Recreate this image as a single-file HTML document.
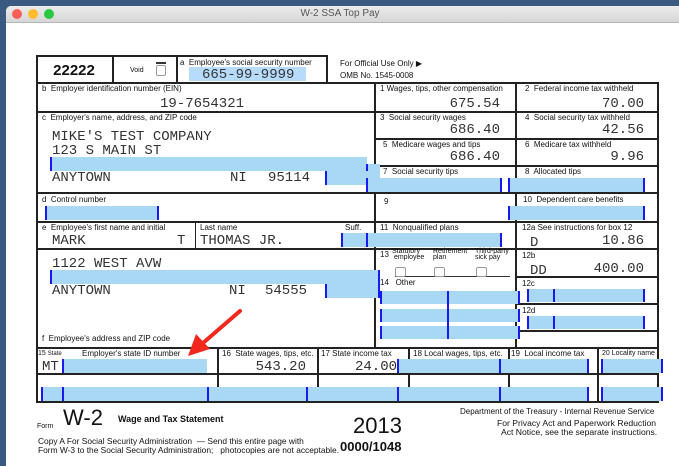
<!DOCTYPE html>
<html><head><meta charset="utf-8"><style>
*{margin:0;padding:0;box-sizing:border-box}
body{width:679px;height:458px;overflow:hidden;background:#3b5a82;position:relative;font-family:"Liberation Sans",sans-serif;color:#111}
.a{position:absolute}
.win{position:absolute;left:6px;top:6px;width:680px;height:460px;background:#fff;border-radius:5px 5px 0 0;overflow:hidden}
.tb{position:absolute;left:0;top:0;width:100%;height:17px;background:linear-gradient(#ececec,#d6d6d6);border-bottom:1px solid #b5b5b5}
.h{position:absolute;height:2px;background:#222}
.v{position:absolute;width:2px;background:#222}
.l{position:absolute;font-size:8px;white-space:nowrap;line-height:8px}
.m{position:absolute;font-family:"Liberation Mono",monospace;font-size:14px;white-space:nowrap;line-height:14px;color:#333}
.r{text-align:right}
.x{position:absolute;background:#a8d8f4;border-left:2px solid #1a1af0;border-right:2px solid #1a1af0}
.cb{position:absolute;width:9px;height:10px;border:1px solid #999;border-radius:2px;background:#fff}
</style></head><body>
<div class="win">
<div class="tb">
<div class="a" style="left:6px;top:3px;width:10px;height:10px;border-radius:50%;background:#fc5f57"></div>
<div class="a" style="left:22px;top:3px;width:10px;height:10px;border-radius:50%;background:#fdbc2e"></div>
<div class="a" style="left:38px;top:3px;width:10px;height:10px;border-radius:50%;background:#29c840"></div>
<div class="a" style="left:0;width:668px;top:2px;text-align:center;font-size:10px;color:#555">W-2 SSA Top Pay</div>
</div>
</div>
<div class="h" style="left:36px;top:55px;width:292px"></div>
<div class="v" style="left:36px;top:55px;height:348px"></div>
<div class="v" style="left:112px;top:55px;height:28px"></div>
<div class="v" style="left:176px;top:55px;height:28px"></div>
<div class="v" style="left:326px;top:55px;height:28px"></div>
<div class="h" style="left:36px;top:82px;width:623px"></div>
<div class="v" style="left:657px;top:82px;height:321px"></div>
<div class="v" style="left:374px;top:82px;height:267px"></div>
<div class="v" style="left:515px;top:82px;height:266px"></div>
<div class="h" style="left:36px;top:111px;width:623px"></div>
<div class="h" style="left:374px;top:138px;width:285px"></div>
<div class="h" style="left:380px;top:165px;width:279px"></div>
<div class="h" style="left:36px;top:192px;width:623px"></div>
<div class="h" style="left:36px;top:221px;width:623px"></div>
<div class="h" style="left:36px;top:248px;width:623px"></div>
<div class="v" style="left:195px;top:222px;height:27px;width:1px"></div>
<div class="h" style="left:515px;top:276px;width:144px"></div>
<div class="h" style="left:515px;top:303px;width:144px"></div>
<div class="h" style="left:515px;top:330px;width:144px"></div>
<div class="h" style="left:36px;top:347px;width:623px"></div>
<div class="h" style="left:36px;top:373px;width:623px"></div>
<div class="h" style="left:36px;top:401px;width:623px"></div>
<div class="v" style="left:217px;top:348px;height:54px"></div>
<div class="v" style="left:317px;top:348px;height:54px"></div>
<div class="v" style="left:408px;top:348px;height:54px"></div>
<div class="v" style="left:508px;top:348px;height:54px"></div>
<div class="v" style="left:597px;top:348px;height:54px"></div>
<div class="a" style="left:36px;width:76px;top:62px;text-align:center;font-weight:bold;font-size:15px">22222</div>
<div class="l" style="left:130px;top:67px;font-size:7px">Void</div>
<div class="a" style="left:156px;top:62px;width:10px;height:2px;background:#333"></div>
<div class="cb" style="left:156px;top:65px;width:10px;height:11px"></div>
<div class="l" style="left:180px;top:59px">a&nbsp; Employee's social security number</div>
<div class="a" style="left:189px;top:67px;width:117px;height:14px;background:#b7dcfb"></div>
<div class="m" style="left:202px;top:68px">665-99-9999</div>
<div class="l" style="left:340px;top:60px">For Official Use Only &#9654;</div>
<div class="l" style="left:340px;top:72px">OMB No. 1545-0008</div>
<div class="l" style="left:42px;top:85px">b&nbsp; Employer identification number (EIN)</div>
<div class="m" style="left:160px;top:97px">19-7654321</div>
<div class="l" style="left:380px;top:85px">1 Wages, tips, other compensation</div>
<div class="m r" style="left:400px;width:100px;top:97px">675.54</div>
<div class="l" style="left:525px;top:85px">2&nbsp; Federal income tax withheld</div>
<div class="m r" style="left:540px;width:104px;top:97px">70.00</div>
<div class="l" style="left:42px;top:114px">c&nbsp; Employer's name, address, and ZIP code</div>
<div class="m" style="left:52px;top:130px">MIKE'S TEST COMPANY</div>
<div class="m" style="left:52px;top:144px">123 S MAIN ST</div>
<div class="x" style="left:50px;top:157px;width:317px;height:14px;border-right:0"></div>
<div class="x" style="left:366px;top:164px;width:14px;height:20px;border-right:0"></div>
<div class="x" style="left:325px;top:171px;width:44px;height:14px;border-right:0"></div>
<div class="m" style="left:52px;top:171px">ANYTOWN</div>
<div class="m" style="left:230px;top:171px">NI</div>
<div class="m" style="left:268px;top:171px">95114</div>
<div class="l" style="left:380px;top:114px">3&nbsp; Social security wages</div>
<div class="m r" style="left:400px;width:100px;top:123px">686.40</div>
<div class="l" style="left:525px;top:114px">4&nbsp; Social security tax withheld</div>
<div class="m r" style="left:540px;width:104px;top:123px">42.56</div>
<div class="l" style="left:383px;top:141px">5&nbsp; Medicare wages and tips</div>
<div class="m r" style="left:400px;width:100px;top:150px">686.40</div>
<div class="l" style="left:525px;top:141px">6&nbsp; Medicare tax withheld</div>
<div class="m r" style="left:540px;width:104px;top:150px">9.96</div>
<div class="l" style="left:383px;top:168px">7&nbsp; Social security tips</div>
<div class="x" style="left:366px;top:178px;width:136px;height:14px"></div>
<div class="l" style="left:525px;top:168px">8&nbsp; Allocated tips</div>
<div class="x" style="left:508px;top:178px;width:137px;height:14px"></div>
<div class="l" style="left:42px;top:196px">d&nbsp; Control number</div>
<div class="x" style="left:45px;top:206px;width:114px;height:14px"></div>
<div class="l" style="left:384px;top:198px">9</div>
<div class="l" style="left:523px;top:196px">10&nbsp; Dependent care benefits</div>
<div class="x" style="left:508px;top:206px;width:137px;height:14px"></div>
<div class="l" style="left:42px;top:224px">e&nbsp; Employee's first name and initial</div>
<div class="l" style="left:200px;top:224px">Last name</div>
<div class="l" style="left:345px;top:224px">Suff.</div>
<div class="m" style="left:52px;top:234px">MARK</div>
<div class="m" style="left:177px;top:234px">T</div>
<div class="m" style="left:200px;top:234px">THOMAS JR.</div>
<div class="l" style="left:380px;top:224px">11&nbsp; Nonqualified plans</div>
<div class="x" style="left:341px;top:233px;width:161px;height:14px"></div>
<div class="a" style="left:366px;top:233px;width:2px;height:14px;background:#1a1af0"></div>
<div class="l" style="left:522px;top:224px">12a See instructions for box 12</div>
<div class="m" style="left:530px;top:236px">D</div>
<div class="m r" style="left:540px;width:104px;top:234px">10.86</div>
<div class="m" style="left:52px;top:257px">1122 WEST AVW</div>
<div class="x" style="left:50px;top:270px;width:330px;height:14px;border-right:0"></div>
<div class="x" style="left:325px;top:284px;width:55px;height:14px;border-right:0"></div>
<div class="a" style="left:378px;top:270px;width:2px;height:28px;background:#1a1af0"></div>
<div class="m" style="left:52px;top:284px">ANYTOWN</div>
<div class="m" style="left:229px;top:284px">NI</div>
<div class="m" style="left:265px;top:284px">54555</div>
<div class="l" style="left:42px;top:335px">f&nbsp; Employee's address and ZIP code</div>
<div class="l" style="left:380px;top:251px">13</div>
<div class="l" style="left:392px;top:249px;line-height:6px;font-size:7px">Statutory<br>&nbsp;employee</div>
<div class="l" style="left:433px;top:249px;line-height:6px;font-size:7px">Retirement<br>plan</div>
<div class="l" style="left:475px;top:249px;line-height:6px;font-size:7px">Third-party<br>sick pay</div>
<div class="a" style="left:395px;top:276px;width:115px;height:1px;background:#333"></div>
<div class="cb" style="left:395px;top:267px;width:11px"></div>
<div class="cb" style="left:434px;top:267px;width:11px"></div>
<div class="cb" style="left:476px;top:267px;width:11px"></div>
<div class="l" style="left:380px;top:279px">14&nbsp;&nbsp; Other</div>
<div class="x" style="left:380px;top:291px;width:140px;height:13px"></div>
<div class="x" style="left:380px;top:309px;width:140px;height:13px"></div>
<div class="x" style="left:380px;top:326px;width:140px;height:13px"></div>
<div class="a" style="left:447px;top:291px;width:2px;height:48px;background:#1a1af0"></div>
<div class="l" style="left:522px;top:252px">12b</div>
<div class="m" style="left:530px;top:264px">DD</div>
<div class="m r" style="left:540px;width:104px;top:262px">400.00</div>
<div class="l" style="left:522px;top:280px">12c</div>
<div class="x" style="left:527px;top:289px;width:118px;height:13px"></div>
<div class="a" style="left:553px;top:289px;width:2px;height:13px;background:#1a1af0"></div>
<div class="l" style="left:522px;top:307px">12d</div>
<div class="x" style="left:527px;top:316px;width:118px;height:13px"></div>
<div class="a" style="left:553px;top:316px;width:2px;height:13px;background:#1a1af0"></div>
<div class="l" style="left:38px;top:350px;font-size:7px">15 <span style="font-size:6px">State</span></div>
<div class="l" style="left:82px;top:350px">Employer's state ID number</div>
<div class="l" style="left:222px;top:350px">16&nbsp; State wages, tips, etc.</div>
<div class="l" style="left:321px;top:350px">17 State income tax</div>
<div class="l" style="left:413px;top:350px">18 Local wages, tips, etc.</div>
<div class="l" style="left:511px;top:350px">19&nbsp; Local income tax</div>
<div class="l" style="left:602px;top:350px;font-size:7px">20 Locality name</div>
<div class="m" style="left:42px;top:360px">MT</div>
<div class="x" style="left:62px;top:359px;width:145px;height:14px;border-right:0"></div>
<div class="m r" style="left:220px;width:86px;top:360px">543.20</div>
<div class="m r" style="left:320px;width:77px;top:360px">24.00</div>
<div class="x" style="left:397px;top:359px;width:192px;height:14px"></div>
<div class="a" style="left:499px;top:359px;width:2px;height:14px;background:#1a1af0"></div>
<div class="x" style="left:601px;top:359px;width:62px;height:14px"></div>
<div class="x" style="left:41px;top:387px;width:548px;height:14px"></div>
<div class="a" style="left:62px;top:387px;width:2px;height:14px;background:#1a1af0"></div>
<div class="a" style="left:207px;top:387px;width:2px;height:14px;background:#1a1af0"></div>
<div class="a" style="left:306px;top:387px;width:2px;height:14px;background:#1a1af0"></div>
<div class="a" style="left:397px;top:387px;width:2px;height:14px;background:#1a1af0"></div>
<div class="a" style="left:499px;top:387px;width:2px;height:14px;background:#1a1af0"></div>
<div class="x" style="left:601px;top:387px;width:62px;height:14px"></div>
<div class="l" style="left:37px;top:423px;font-size:7px">Form</div>
<div class="a" style="left:63px;top:406px;font-size:22px;line-height:24px">W-2</div>
<div class="a" style="left:118px;top:414px;font-size:9px;font-weight:bold">Wage and Tax Statement</div>
<div class="l" style="left:38px;top:437px;font-size:8.4px">Copy A For Social Security Administration &nbsp;— Send this entire page with</div>
<div class="l" style="left:38px;top:446px;font-size:8.4px">Form W-3 to the Social Security Administration; &nbsp; photocopies are not acceptable.</div>
<div class="a" style="left:353px;top:414px;font-size:22px;line-height:24px">2013</div>
<div class="a" style="left:340px;top:440px;font-size:13px;font-weight:bold;line-height:14px">0000/1048</div>
<div class="l" style="left:460px;top:408px">Department of the Treasury - Internal Revenue Service</div>
<div class="l" style="left:497px;top:419px;font-size:8.6px">For Privacy Act and Paperwork Reduction</div>
<div class="l" style="left:501px;top:428px;font-size:8.6px">Act Notice, see the separate instructions.</div>
<svg class="a" style="left:0;top:0" width="679" height="458"><line x1="240" y1="311" x2="203" y2="343" stroke="#f0281e" stroke-width="4" stroke-linecap="round"/><polygon points="188,356 196,334 210,349" fill="#f0281e"/></svg>
</body></html>
